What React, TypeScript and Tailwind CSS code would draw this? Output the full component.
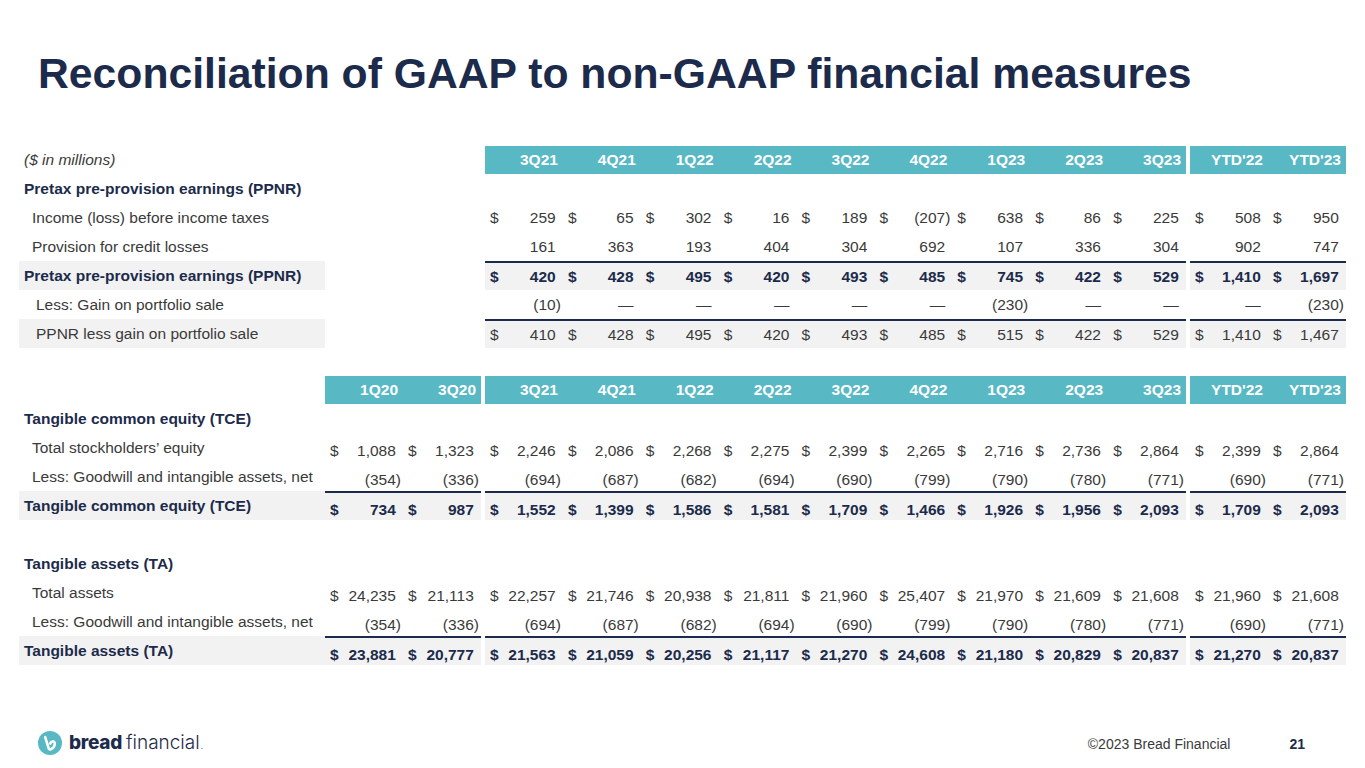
import React from "react";

const NAVY = "text-[#1c2b4b]";

const MAIN1 = ["3Q21", "4Q21", "1Q22", "2Q22", "3Q22", "4Q22", "1Q23", "2Q23", "3Q23"];
const YTD = ["YTD'22", "YTD'23"];
const EARLY = ["1Q20", "3Q20"];

type Row = {
  label: string;
  indent: number; // left padding in px
  bold?: boolean;
  total?: boolean;
  heading?: boolean;
  dollar?: boolean;
  groups?: (string[] | null)[];
  blank?: boolean;
};

const table1: Row[] = [
  { label: "Pretax pre-provision earnings (PPNR)", indent: 5, bold: true, heading: true },
  {
    label: "Income (loss) before income taxes",
    indent: 13,
    dollar: true,
    groups: [null, ["259", "65", "302", "16", "189", "(207)", "638", "86", "225"], ["508", "950"]],
  },
  {
    label: "Provision for credit losses",
    indent: 13,
    groups: [null, ["161", "363", "193", "404", "304", "692", "107", "336", "304"], ["902", "747"]],
  },
  {
    label: "Pretax pre-provision earnings (PPNR)",
    indent: 5,
    bold: true,
    total: true,
    dollar: true,
    groups: [null, ["420", "428", "495", "420", "493", "485", "745", "422", "529"], ["1,410", "1,697"]],
  },
  {
    label: "Less: Gain on portfolio sale",
    indent: 17,
    groups: [null, ["(10)", "—", "—", "—", "—", "—", "(230)", "—", "—"], ["—", "(230)"]],
  },
  {
    label: "PPNR less gain on portfolio sale",
    indent: 17,
    total: true,
    dollar: true,
    groups: [null, ["410", "428", "495", "420", "493", "485", "515", "422", "529"], ["1,410", "1,467"]],
  },
];

const lessGw: (string[] | null)[] = [
  ["(354)", "(336)"],
  ["(694)", "(687)", "(682)", "(694)", "(690)", "(799)", "(790)", "(780)", "(771)"],
  ["(690)", "(771)"],
];

const table2: Row[] = [
  { label: "Tangible common equity (TCE)", indent: 5, bold: true, heading: true },
  {
    label: "Total stockholders’ equity",
    indent: 13,
    dollar: true,
    groups: [
      ["1,088", "1,323"],
      ["2,246", "2,086", "2,268", "2,275", "2,399", "2,265", "2,716", "2,736", "2,864"],
      ["2,399", "2,864"],
    ],
  },
  { label: "Less: Goodwill and intangible assets, net", indent: 13, groups: lessGw },
  {
    label: "Tangible common equity (TCE)",
    indent: 5,
    bold: true,
    total: true,
    dollar: true,
    groups: [
      ["734", "987"],
      ["1,552", "1,399", "1,586", "1,581", "1,709", "1,466", "1,926", "1,956", "2,093"],
      ["1,709", "2,093"],
    ],
  },
  { label: "", indent: 0, blank: true },
  { label: "Tangible assets (TA)", indent: 5, bold: true, heading: true },
  {
    label: "Total assets",
    indent: 13,
    dollar: true,
    groups: [
      ["24,235", "21,113"],
      ["22,257", "21,746", "20,938", "21,811", "21,960", "25,407", "21,970", "21,609", "21,608"],
      ["21,960", "21,608"],
    ],
  },
  { label: "Less: Goodwill and intangible assets, net", indent: 13, groups: lessGw },
  {
    label: "Tangible assets (TA)",
    indent: 5,
    bold: true,
    total: true,
    dollar: true,
    groups: [
      ["23,881", "20,777"],
      ["21,563", "21,059", "20,256", "21,117", "21,270", "24,608", "21,180", "20,829", "20,837"],
      ["21,270", "20,837"],
    ],
  },
];

const groupW = ["w-[156px]", "w-[701px]", "w-[156px]"];

function Cell({ v, dollar, shift }: { v: string; dollar?: boolean; shift?: boolean }) {
  const paren = v.startsWith("(");
  return (
    <div
      className={`flex-1 min-w-0 h-full flex items-center justify-between pl-[5px] pr-[2px] ${
        shift ? "pt-[7px]" : ""
      }`}
    >
      <span>{dollar ? "$" : ""}</span>
      <span className="whitespace-nowrap">
        {v}
        {!paren && <span className="invisible">)</span>}
      </span>
    </div>
  );
}

function Header({ note, groups }: { note?: string; groups: (string[] | null)[] }) {
  return (
    <div className="flex h-[28px]">
      <div className="w-[306px] flex items-center pl-[5px] italic text-[#3a3a3a]">{note}</div>
      <div className="flex gap-[4px]">
        {groups.map((g, i) => (
          <div key={i} className={`${groupW[i]} h-full flex ${g ? "bg-[#58b8c4]" : ""}`}>
            {g?.map((h) => (
              <div key={h} className="flex-1 flex items-center justify-end pr-[5px] font-bold text-white">
                {h}
              </div>
            ))}
          </div>
        ))}
      </div>
    </div>
  );
}

function Table({ rows, shift }: { rows: Row[]; shift?: boolean }) {
  return (
    <div className="flex flex-col">
      {rows.map((r, idx) => (
        <div key={idx} className={`flex h-[29px] ${r.bold ? `font-bold ${NAVY}` : "text-[#3a3a3a]"}`}>
          <div
            className={`w-[306px] h-full flex items-center whitespace-nowrap ${r.total ? "bg-[#f2f2f2]" : ""}`}
            style={{ paddingLeft: r.indent }}
          >
            {r.label}
          </div>
          <div className="flex gap-[4px]">
            {[0, 1, 2].map((gi) => {
              const g = r.groups ? r.groups[gi] : null;
              const filled = !!g || (!!r.groups && gi > 0);
              return (
                <div
                  key={gi}
                  className={`${groupW[gi]} h-full flex ${
                    r.total && filled ? "bg-[#f2f2f2] border-t-2 border-[#1c2b4b]" : ""
                  }`}
                >
                  {g?.map((v, vi) => (
                    <Cell key={vi} v={v} dollar={r.dollar} shift={shift} />
                  ))}
                </div>
              );
            })}
          </div>
        </div>
      ))}
    </div>
  );
}

function Logo() {
  return (
    <div className="flex items-center gap-[7px]">
      <svg width="24" height="24" viewBox="0 0 24 24">
        <circle cx="12" cy="12" r="12" fill="#58b8c4" />
        <path
          d="M7.2 6.2 L10.6 17.2 Q11.2 18.8 12.8 18.2 Q16.6 16.6 16.8 12.6 Q16.8 10.2 14.4 10.4 Q12.6 10.8 12.2 12.6"
          fill="none"
          stroke="#fff"
          strokeWidth="2.6"
          strokeLinecap="round"
          strokeLinejoin="round"
        />
      </svg>
      <div className={`flex items-baseline ${NAVY}`} style={{ fontFamily: "Inter, 'Noto Sans', sans-serif" }}>
        <span className="text-[19px] font-extrabold tracking-[-0.3px]">bread</span>
        <span className="text-[19px] font-light ml-[4px]">financial</span>
        <span className="text-[8px] ml-[1px]">.</span>
      </div>
    </div>
  );
}

export default function App() {
  return (
    <div
      className="w-[1365px] h-[768px] bg-white overflow-hidden flex flex-col text-[15.5px]"
      style={{ fontFamily: "'Liberation Sans', Arial, sans-serif" }}
    >
      <div className="h-[146px] pt-[52px] pl-[38px]">
        <h1 className={`text-[42.7px] leading-none font-bold ${NAVY}`}>
          Reconciliation of GAAP to non-GAAP financial measures
        </h1>
      </div>

      <div className="pl-[19px] flex flex-col">
        <Header note="($ in millions)" groups={[null, MAIN1, YTD]} />
        <Table rows={table1} />
      </div>

      <div className="pl-[19px] flex flex-col mt-[28px]">
        <Header groups={[EARLY, MAIN1, YTD]} />
        <Table rows={table2} shift />
      </div>

      <div className="mt-[64px] h-[28px] flex items-center pl-[38px] pr-[60px]">
        <Logo />
        <div className="ml-auto flex items-center gap-[59px] text-[14px] pt-[3px]">
          <span className="text-[#3a3a3a]">©2023 Bread Financial</span>
          <span className={`font-bold ${NAVY}`}>21</span>
        </div>
      </div>
    </div>
  );
}
